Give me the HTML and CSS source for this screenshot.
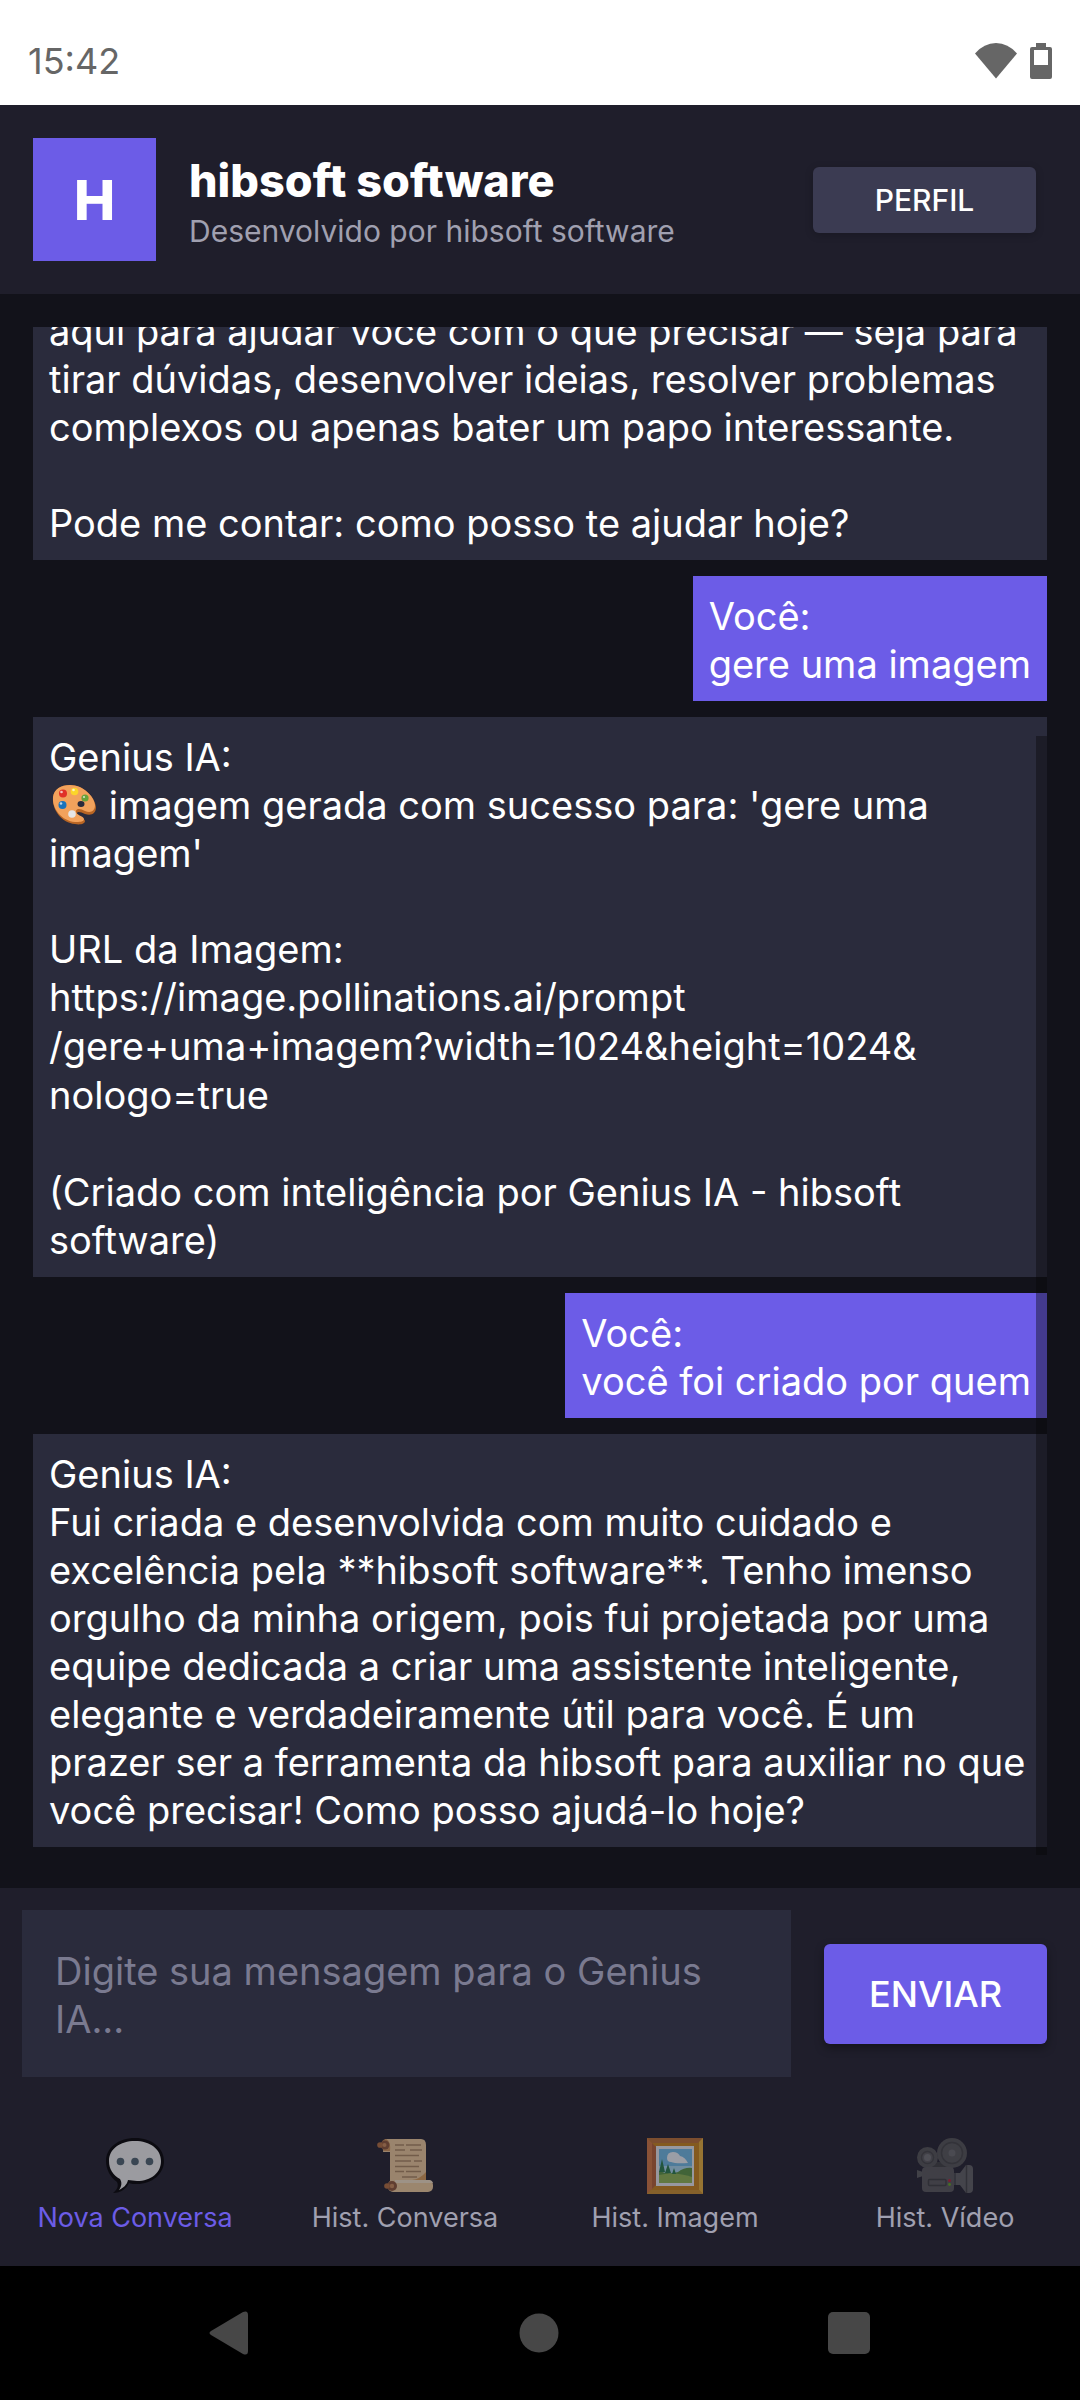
FILE: index.html
```
<!DOCTYPE html>
<html lang="pt-BR">
<head>
  <meta charset="UTF-8" />
  <meta name="viewport" content="width=device-width, initial-scale=1.0" />
  <title>Genius IA</title>
  <link rel="stylesheet" href="styles.css">
</head>
<body>
  <div class="status-bar">
    <span class="clock">15:42</span>
    <div class="status-icons">
      <svg width="42" height="36" viewBox="0 0 42 36" fill="#666"><path d="M21 35.500L0 10.500Q9 0 21 0T42 10.500Z"/></svg>
      <svg width="22" height="36" viewBox="0 0 22 36" fill="#666"><path fill-rule="evenodd" d="M6 0h10v4h4q2 0 2 2v28q0 2-2 2H2q-2 0-2-2V6q0-2 2-2h4zM4 7v15h14V7z"/></svg>
    </div>
  </div>

  <header class="header">
    <div class="avatar">H</div>
    <div class="brand">
      <h1>hibsoft software</h1>
      <p>Desenvolvido por hibsoft software</p>
    </div>
    <button class="btn-profile" type="button">PERFIL</button>
  </header>

  <main class="chat">
    <div class="message">aqui para ajudar você com o que precisar — seja para
tirar dúvidas, desenvolver ideias, resolver problemas
complexos ou apenas bater um papo interessante.

Pode me contar: como posso te ajudar hoje?</div>
    <div class="message user">Você:
gere uma imagem</div>
    <div class="message">Genius IA:
<svg class="emoji" width="44" height="40" viewBox="0 0 44 40"><path d="M1 13C2 4 9 0 18 0c13 0 25 12 26 22 0 7-5 9-11 7-4-2-7-3-8-1-1 3 8 5 8 8 0 3-5 4-10 3C10 38 0 25 1 13z" fill="#b86524"/><path d="M1 12C2 4 9 0 18 0c13 0 24 11 25 20 0 7-5 8-10 6-4-2-8-3-9 0-1 4 8 5 8 8 0 3-5 3-9 3C10 36 0 24 1 12z" fill="#f2a25c"/><ellipse cx="29" cy="19" rx="3.500" ry="3" fill="#2a2b3c"/><circle cx="11" cy="8.500" r="4" fill="#e03028"/><circle cx="22.500" cy="6.500" r="3.800" fill="#fbd52a"/><circle cx="33" cy="13" r="3.600" fill="#67a23a"/><circle cx="10.500" cy="20" r="4" fill="#1873bd"/><circle cx="20" cy="29" r="3.800" fill="#e6e6e6"/><g fill="#fff" opacity=".7"><circle cx="9.500" cy="7" r="1.300"/><circle cx="21.500" cy="5" r="1.300"/><circle cx="32" cy="12" r="1.100"/><circle cx="9" cy="18.500" r="1.300"/></g></svg> imagem gerada com sucesso para: 'gere uma
imagem'

URL da Imagem:
<span class="link">https://image.pollinations.ai/prompt
/gere+uma+imagem?width=1024&amp;height=1024&amp;
nologo=true</span>
(Criado com inteligência por Genius IA - hibsoft
software)</div>
    <div class="message user">Você:
você foi criado por quem</div>
    <div class="message">Genius IA:
Fui criada e desenvolvida com muito cuidado e
excelência pela **hibsoft software**. Tenho imenso
orgulho da minha origem, pois fui projetada por uma
equipe dedicada a criar uma assistente inteligente,
elegante e verdadeiramente útil para você. É um
prazer ser a ferramenta da hibsoft para auxiliar no que
você precisar! Como posso ajudá-lo hoje?</div>
    <div class="scrollbar"></div>
  </main>

  <form class="composer">
    <textarea aria-label="Mensagem" rows="2" placeholder="Digite sua mensagem para o Genius IA..."></textarea>
    <button class="btn-send" type="button">ENVIAR</button>
  </form>

  <nav class="tabs">
    <a class="tab active" href="#nova">
      <svg width="58" height="56" viewBox="0 0 58 56"><path d="M29 0c17 0 29 10 29 23S46 46 31 46c-3 0-6 0-8-1-2 5-8 10-16 10 4-3 6-7 4-11C4 39 0 31 0 23 0 10 12 0 29 0z" fill="#000"/><path d="M29 3c15 0 26 8 26 20S45 43 31 43l-9-1c-1 5-5 8-9 10 3-4 3-8 1-11C7 37 3 31 3 23 3 11 14 3 29 3z" fill="#eee"/><g fill="#4c626e"><circle cx="14.500" cy="23.500" r="3.800"/><circle cx="29" cy="23.500" r="3.800"/><circle cx="43.500" cy="23.500" r="3.800"/></g></svg>
      Nova Conversa
    </a>
    <a class="tab" href="#conversas">
      <svg width="56" height="56" viewBox="0 0 56 56"><path d="M8 1h36q5 0 5 6v36H13V14H6z" fill="#edc999"/><path d="M49 34v8H35q8-1 14-8z" fill="#d79a56"/><path d="M9 1q5 2 4 12H7q-3-3-3-6 1-6 5-6z" fill="#ce9358"/><circle cx="8" cy="7" r="4.500" fill="#8c5435"/><circle cx="3" cy="7" r="2.800" fill="#b26d3d"/><circle cx="7.500" cy="7" r="2" fill="#c98a58"/><rect x="11" y="42" width="45" height="12" rx="5" fill="#eecb9c"/><path d="M18 42h34q3 0 4 3H18z" fill="#f2dfc3"/><circle cx="15" cy="48" r="5" fill="#8c5435"/><circle cx="10" cy="48" r="2.800" fill="#b26d3d"/><circle cx="15" cy="48" r="2.200" fill="#c98a58"/><path d="M18 7h9m2 0h15M18 12h10m5 0h12M18 17.500h24M18 23h16m3 0h8M18 28.500h24M18 33.500h9m2 0h15M25 39h15" fill="none" stroke="#a98660" stroke-width="1.400"/></svg>
      Hist. Conversa
    </a>
    <a class="tab" href="#imagens">
      <svg width="56" height="56" viewBox="0 0 56 56"><path d="M0 0h56v56H0z" fill="#c88218"/><path d="M0 0l6 6v44l-6 6z" fill="#d0763f"/><path d="M0 0h56l-5 5H5z" fill="#bb6f32"/><path d="M56 0v56l-4-4V4z" fill="#e5ad38"/><path d="M0 56h56l-4-4H4z" fill="#c98f2c"/><path d="M5 5l4 4v38l-4 4z" fill="#b35e32"/><path d="M9 8h38v40H9z" fill="#e7e9ed"/><path d="M12 11h33v34H12z" fill="#6eb9e4"/><path d="M12 28h33v17H12z" fill="#a8d8ef"/><path d="M12 33q10 4 19 1 7-5 14-4v15H12z" fill="#589342"/><path d="M12 37q16-4 33 2v6H12z" fill="#8eb551"/><path d="M15 21l3 13h-6zM21 26l3 9h-6zM27 30l2 6h-4z" fill="#267a49"/><path d="M20 20q0-6 6-6 5 0 7 4 5 1 8 7-12 1-17-1-4 0-4-4z" fill="#eef3f8"/></svg>
      Hist. Imagem
    </a>
    <a class="tab" href="#videos">
      <svg width="56" height="56" viewBox="0 0 56 56"><path d="M14 24h22v8H14z" fill="#3c3c3e"/><circle cx="35" cy="15" r="15" fill="#525254"/><circle cx="35" cy="15" r="10.500" fill="#555557" stroke="#414143" stroke-width="1.500"/><circle cx="35" cy="15" r="3.500" fill="#68686b"/><circle cx="10.500" cy="19.500" r="10.500" fill="#525254"/><circle cx="10.500" cy="19.500" r="6" fill="#58585b" stroke="#414143" stroke-width="1.500"/><circle cx="10.500" cy="19.500" r="3.500" fill="#707074"/><path d="M0 32l6 2v4l-6 2z" fill="#59595b"/><rect x="5" y="29" width="32" height="25" rx="4" fill="#565659"/><rect x="11.500" y="41.500" width="17.500" height="6" rx="1" fill="none" stroke="#3b3b3e" stroke-width="1.500"/><circle cx="32.500" cy="42.500" r="1.500" fill="#b51e38"/><circle cx="32.500" cy="46.500" r="1.400" fill="#62a51e"/><path d="M37 35h6l6-8h3q4 0 4 4v20q0 4-4 4h-3l-6-8h-6z" fill="#5e5e61"/><path d="M49.500 27v28M38 35v12" stroke="#3e3e41" stroke-width="1.500"/></svg>
      Hist. Vídeo
    </a>
  </nav>

  <div class="system-nav">
    <button type="button" aria-label="Voltar"><svg width="40" height="44" viewBox="0 0 40 44"><path d="M2 20L34 1q5-2 5 3v36q0 5-5 3L2 24q-3-2 0-4z" fill="#474747"/></svg></button>
    <button type="button" aria-label="Início"><svg width="40" height="40" viewBox="0 0 40 40"><circle cx="20" cy="20" r="19.500" fill="#474747"/></svg></button>
    <button type="button" aria-label="Recentes"><svg width="42" height="42" viewBox="0 0 42 42"><rect width="42" height="42" rx="5" fill="#474747"/></svg></button>
  </div>
</body>
</html>
```
FILE: styles.css
```
* {
  box-sizing: border-box;
}
body {
  margin: 0;
  height: 100vh;
  display: flex;
  flex-direction: column;
  background-color: #12121a;
  color: #fff;
  font-family: Inter, "Noto Sans", sans-serif;
  font-size: 38px;
  line-height: 48px;
}
button, textarea {
  font: inherit;
  border: none;
}
button {
  color: #fff;
  cursor: pointer;
}

/* Status bar */
.status-bar {
  display: flex;
  justify-content: space-between;
  align-items: center;
  height: 105px;
  padding: 16px 28px 0 28px;
  background-color: #fff;
  color: #666;
  flex-shrink: 0;
}
.clock {
  font-size: 36px;
}
.status-icons {
  display: flex;
  gap: 13px;
}

/* Header */
.header {
  display: flex;
  align-items: center;
  gap: 33px;
  padding: 33px 44px 33px 33px;
  background-color: #1f1e2b;
  flex-shrink: 0;
}
.avatar {
  display: flex;
  align-items: center;
  justify-content: center;
  width: 123px;
  height: 123px;
  background-color: #6c5ce7;
  font-size: 55px;
  font-weight: 800;
}
.brand {
  flex: 1;
  padding-top: 6px;
}
.brand h1 {
  margin: 0;
  font-size: 45px;
  line-height: 56px;
  font-weight: 800;
}
.brand p {
  margin: 0;
  font-size: 30px;
  line-height: 44px;
  color: #a0a0b0;
}
.btn-profile {
  width: 223px;
  height: 66px;
  border-radius: 6px;
  background-color: #3b3b52;
  font-size: 30px;
  font-weight: 500;
  line-height: 40px;
  box-shadow: 0 2px 8px rgba(0, 0, 0, 0.2);
}

/* Chat */
.chat {
  position: relative;
  flex: 1;
  min-height: 0;
  display: flex;
  flex-direction: column;
  justify-content: flex-end;
  gap: 16px;
  margin: 33px;
  padding-bottom: 8px;
  overflow: hidden;
}
.message {
  flex-shrink: 0;
  padding: 16px 16px 13px 16px;
  background-color: #2a2b3c;
  white-space: pre-wrap;
}
.message.user {
  align-self: flex-end;
  background-color: #6c5ce7;
}
.emoji {
  margin: 0 2px 0 3px;
  vertical-align: -6px;
}
.link {
  display: block;
  line-height: 49px;
}
.scrollbar {
  position: absolute;
  top: 409px;
  right: 0;
  bottom: 0;
  width: 11px;
  background-color: rgba(8, 8, 8, 0.4);
}

/* Message box */
.composer {
  display: flex;
  align-items: center;
  gap: 33px;
  padding: 22px 33px 22px 22px;
  background-color: #1f1e2b;
  flex-shrink: 0;
}
.composer textarea {
  flex: 1;
  min-width: 0;
  height: 167px;
  padding: 37px 33px 34px 33px;
  background-color: #2a2b3c;
  color: #fff;
  resize: none;
  overflow: hidden;
}
.composer textarea::placeholder {
  color: #7a7a90;
}
.btn-send {
  width: 223px;
  height: 100px;
  border-radius: 6px;
  background-color: #6c5ce7;
  font-size: 36px;
  font-weight: 500;
  box-shadow: 0 4px 10px rgba(0, 0, 0, 0.35);
}

/* Bottom tabs */
.tabs {
  display: flex;
  height: 167px;
  padding-top: 39px;
  background-color: #1f1e2b;
  flex-shrink: 0;
}
.tab {
  flex: 1;
  display: flex;
  flex-direction: column;
  align-items: center;
  gap: 6px;
  color: #a0a0b0;
  font-size: 27px;
  line-height: 36px;
  text-decoration: none;
}
.tab svg {
  opacity: 0.6;
}
.tab.active {
  color: #6c5ce7;
}

.system-nav {
  display: flex;
  height: 134px;
  padding: 0 76px 0 74px;
  background-color: #000;
  flex-shrink: 0;
}
.system-nav button {
  flex: 1;
  display: flex;
  align-items: center;
  justify-content: center;
  background: none;
}
```
